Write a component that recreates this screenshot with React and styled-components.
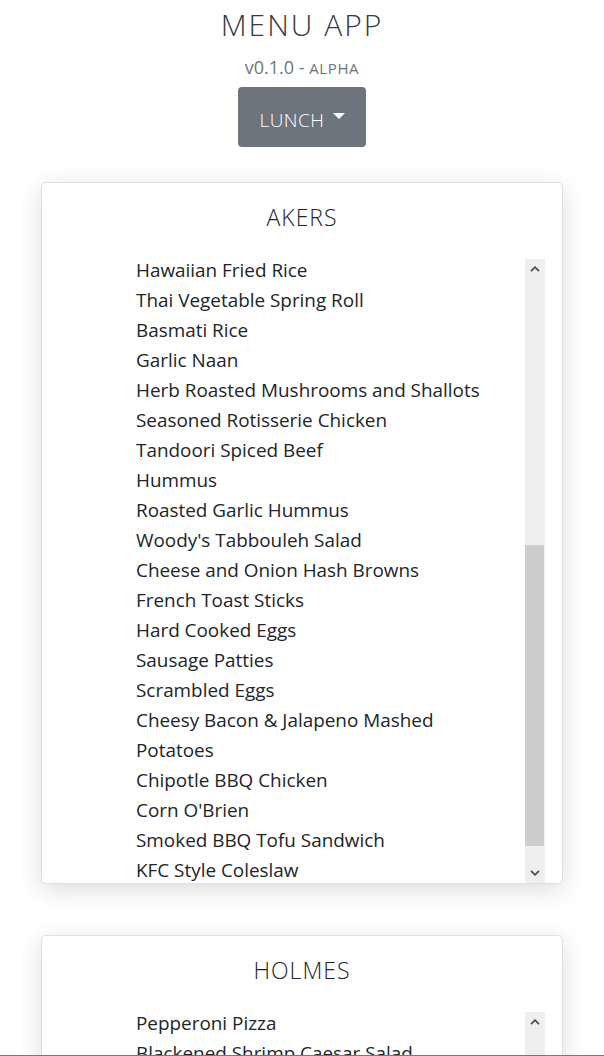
import React from 'react';
import styled, { createGlobalStyle } from 'styled-components';

const GlobalStyle = createGlobalStyle`
  html, body { margin: 0; padding: 0; background: #fff; }
  body {
    font-family: "Open Sans", "Noto Sans", sans-serif;
    color: #212529;
  }
  * { box-sizing: border-box; }
`;

const Page = styled.div`
  display: flex;
  flex-direction: column;
  align-items: center;
  padding-top: 7px;
`;

const Title = styled.h1`
  margin: 0;
  font-weight: 300;
  font-size: 30px;
  line-height: 36px;
  letter-spacing: 2px;
  color: #343a40;
`;

const Version = styled.div`
  margin-top: 13px;
  height: 22px;
  color: #6c757d;
  font-size: 18px;
  font-weight: 500;
  line-height: 22px;
`;

const Small = styled.span`
  font-size: 15px;
  letter-spacing: 0.6px;
`;

const DropButton = styled.button`
  margin-top: 9px;
  width: 128px;
  height: 60px;
  background: #6c757d;
  border: none;
  border-radius: 4px;
  color: #fff;
  font-family: "Open Sans", "Noto Sans", sans-serif;
  font-weight: 300;
  font-size: 19px;
  letter-spacing: 0.5px;
  display: flex;
  align-items: center;
  justify-content: center;
  gap: 8px;
  padding: 5px 0 0;
`;

const Caret = styled.span`
  width: 0;
  height: 0;
  border-left: 6px solid transparent;
  border-right: 6px solid transparent;
  border-top: 6px solid #fff;
  margin-top: -7px;
`;

const Cards = styled.div`
  margin-top: 35px;
  display: flex;
  flex-direction: column;
  gap: 51px;
  width: 522px;
`;

const Card = styled.section`
  width: 522px;
  height: 702px;
  border: 1px solid #e0e0e0;
  border-radius: 5px;
  background: #fff;
  box-shadow: 0 6px 24px rgba(0, 0, 0, 0.14);
  padding: 0 17px;
  display: flex;
  flex-direction: column;
`;

const CardTitle = styled.h2`
  margin: 19px 0 23px;
  text-align: center;
  font-weight: 300;
  font-size: 23px;
  line-height: 30px;
  letter-spacing: 1px;
  color: #212529;
`;

const ListRow = styled.div`
  display: flex;
  height: 628px;
`;

const Viewport = styled.div`
  flex: 1;
  overflow: hidden;
  padding-left: 77px;
`;

const ItemList = styled.ul`
  margin: 0;
  padding: 0;
  list-style: none;
  width: 362px;
`;

const Item = styled.li`
  font-size: 18.9px;
  line-height: 30px;
`;

const Scrollbar = styled.div`
  margin-top: 4px;
  width: 20px;
  background: #efefef;
  display: flex;
  flex-direction: column;
`;

const ArrowBtn = styled.div`
  height: 20px;
  display: flex;
  align-items: center;
  justify-content: center;
`;

const Track = styled.div`
  flex: 1;
  position: relative;
`;

const Thumb = styled.div`
  position: absolute;
  left: 0;
  right: 1px;
  top: ${(p) => p.$top}px;
  height: ${(p) => p.$size}px;
  background: #cdcdcd;
`;

const BottomEdge = styled.div`
  position: fixed;
  left: 0;
  right: 0;
  bottom: 0;
  height: 1px;
  background: #6a7b8c;
`;

const Chevron = ({ up }) => (
  <svg width="10" height="6" viewBox="0 0 10 6">
    <path
      d={up ? 'M1 5.2 L5 1.2 L9 5.2' : 'M1 0.8 L5 4.8 L9 0.8'}
      fill="none"
      stroke="#505050"
      strokeWidth="1.8"
    />
  </svg>
);

const MenuCard = ({ name, items, thumbTop, thumbSize }) => (
  <Card>
    <CardTitle>{name}</CardTitle>
    <ListRow>
      <Viewport>
        <ItemList>
          {items.map((it) => (
            <Item key={it}>{it}</Item>
          ))}
        </ItemList>
      </Viewport>
      <Scrollbar>
        <ArrowBtn>
          <Chevron up />
        </ArrowBtn>
        <Track>
          <Thumb $top={thumbTop} $size={thumbSize} />
        </Track>
        <ArrowBtn>
          <Chevron />
        </ArrowBtn>
      </Scrollbar>
    </ListRow>
  </Card>
);

const akers = [
  'Hawaiian Fried Rice',
  'Thai Vegetable Spring Roll',
  'Basmati Rice',
  'Garlic Naan',
  'Herb Roasted Mushrooms and Shallots',
  'Seasoned Rotisserie Chicken',
  'Tandoori Spiced Beef',
  'Hummus',
  'Roasted Garlic Hummus',
  "Woody's Tabbouleh Salad",
  'Cheese and Onion Hash Browns',
  'French Toast Sticks',
  'Hard Cooked Eggs',
  'Sausage Patties',
  'Scrambled Eggs',
  'Cheesy Bacon & Jalapeno Mashed Potatoes',
  'Chipotle BBQ Chicken',
  "Corn O'Brien",
  'Smoked BBQ Tofu Sandwich',
  'KFC Style Coleslaw',
];

const holmes = [
  'Pepperoni Pizza',
  'Blackened Shrimp Caesar Salad',
  'Cheese Pizza',
  'Garden Salad',
  'Steamed Broccoli',
  'Penne Marinara',
  'Grilled Chicken Breast',
  'Roasted Potatoes',
];

export default function App() {
  return (
    <>
      <GlobalStyle />
      <Page>
        <Title>MENU APP</Title>
        <Version>
          v0.1.0 - <Small>ALPHA</Small>
        </Version>
        <DropButton>
          LUNCH <Caret />
        </DropButton>
        <Cards>
          <MenuCard name="AKERS" items={akers} thumbTop={266} thumbSize={301} />
          <MenuCard name="HOLMES" items={holmes} thumbTop={120} thumbSize={300} />
        </Cards>
      </Page>
      <BottomEdge />
    </>
  );
}
